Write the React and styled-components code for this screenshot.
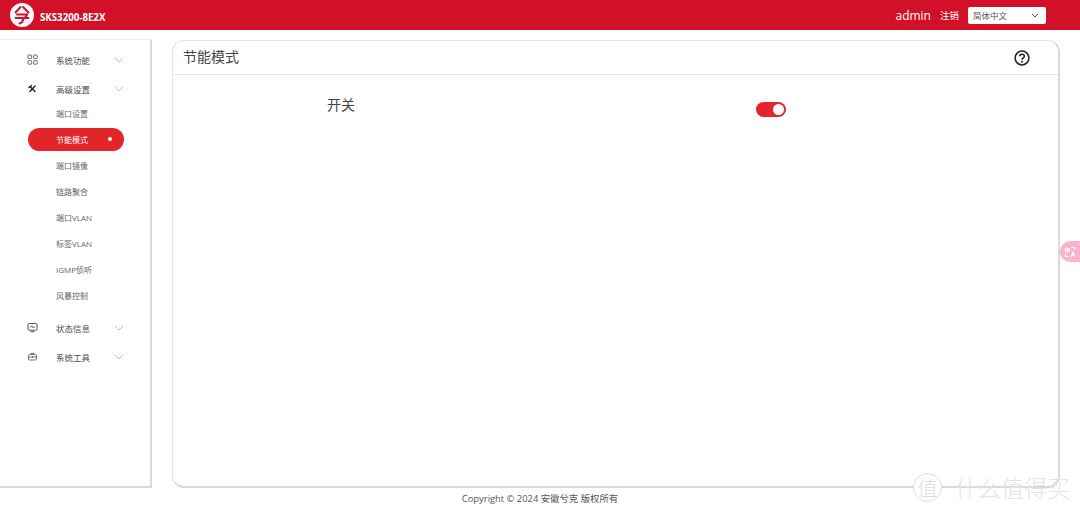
import React from "react";
import styled, { createGlobalStyle } from "styled-components";

const GlobalStyle = createGlobalStyle`
  html, body {
    margin: 0;
    padding: 0;
    background: #fff;
  }
  body {
    font-family: "Open Sans", "Noto Sans CJK SC", sans-serif;
    overflow: hidden;
  }
`;

const Page = styled.div`
  position: relative;
  width: 1080px;
  height: 512px;
  overflow: hidden;
  background: #fff;
`;

const Header = styled.header`
  height: 30px;
  background: #d21027;
  color: #fff;
  display: flex;
  align-items: center;
  padding: 0 34px 0 10px;
`;

const Logo = styled.svg`
  width: 24px;
  height: 24px;
  margin-top: -1px;
`;

const Model = styled.span`
  margin: 5px 0 0 6px;
  font-size: 9.7px;
  font-weight: 700;
`;

const UserName = styled.span`
  margin-left: auto;
  font-size: 12px;
`;

const Logout = styled.span`
  margin-left: 9px;
  font-size: 9.5px;
`;

const LangSelect = styled.div`
  margin-left: 9px;
  width: 78px;
  height: 17px;
  box-sizing: border-box;
  background: #fff;
  border-radius: 2px;
  color: #555;
  font-size: 8.5px;
  display: flex;
  align-items: center;
  justify-content: space-between;
  padding: 0 7px 0 5px;
`;

const Main = styled.div`
  display: flex;
  gap: 20px;
  height: 448px;
  margin-top: 10px;
`;

const Sidebar = styled.nav`
  width: 152px;
  box-sizing: border-box;
  background: #fff;
  border-right: 2px solid #d9d9d9;
  border-bottom: 2px solid #d9d9d9;
  box-shadow: 0 -1px 0 #eee;
  padding-top: 5px;
`;

const GroupRow = styled.div`
  height: 29px;
  display: flex;
  align-items: center;
  padding-left: 27px;
  color: #4a4a4a;
  font-size: 8.5px;
  margin-top: ${(p) => p.$gap || 0}px;
`;

const GroupIcon = styled.svg`
  width: 11px;
  height: 11px;
  margin-right: 18px;
`;

const Chevron = styled.svg`
  width: 10px;
  height: 6px;
  margin-left: auto;
  margin-right: 26px;
`;

const SubList = styled.div`
  display: flex;
  flex-direction: column;
  margin-top: -3px;
`;

const SubItem = styled.div`
  height: 23px;
  margin: 1.5px 0 1.5px 28px;
  width: 96px;
  box-sizing: border-box;
  display: flex;
  align-items: center;
  justify-content: space-between;
  padding: 0 12px 0 28px;
  border-radius: 12px;
  font-size: 8px;
  color: ${(p) => (p.$active ? "#fff" : "#666")};
  background: ${(p) => (p.$active ? "#e12528" : "transparent")};
`;

const ActiveDot = styled.i`
  width: 4px;
  height: 4px;
  border-radius: 50%;
  background: #fff;
`;

const Card = styled.section`
  width: 888px;
  box-sizing: border-box;
  border: 1px solid #e3e3e3;
  border-right: 2px solid #d9d9d9;
  border-bottom: 2px solid #d9d9d9;
  border-radius: 12px;
  background: #fff;
`;

const CardHead = styled.div`
  height: 34px;
  box-sizing: border-box;
  border-bottom: 1px solid #e3e3e3;
  display: flex;
  align-items: center;
  justify-content: space-between;
  padding: 0 28px 4px 10px;
`;

const CardTitle = styled.h2`
  margin: 0;
  font-size: 14px;
  font-weight: 400;
  color: #444;
`;

const HelpIcon = styled.svg`
  width: 16px;
  height: 16px;
  margin-top: 4px;
`;

const SwitchRow = styled.div`
  display: flex;
  align-items: flex-start;
  padding: 21px 0 0 154px;
`;

const SwitchLabel = styled.span`
  font-size: 14px;
  line-height: 18px;
  color: #444;
`;

const Toggle = styled.div`
  margin: 6px 0 0 401px;
  width: 30px;
  height: 15px;
  border-radius: 8px;
  background: #e12528;
  display: flex;
  align-items: center;
  justify-content: flex-end;
  padding-right: 2px;
  box-sizing: border-box;
`;

const ToggleKnob = styled.i`
  width: 11px;
  height: 11px;
  border-radius: 50%;
  background: #fff;
`;

const Footer = styled.footer`
  margin-top: 3px;
  text-align: center;
  font-size: 9.4px;
  line-height: 16px;
  color: #555;
`;

const TranslateTab = styled.div`
  position: absolute;
  right: 0;
  top: 241px;
  width: 20px;
  height: 21px;
  border-radius: 10px 0 0 10px;
  background: #fbb3cf;
  display: flex;
  align-items: center;
  justify-content: center;
`;

const TranslateIcon = styled.svg`
  width: 12px;
  height: 12px;
`;

const Watermark = styled.div`
  position: absolute;
  left: 913px;
  top: 473px;
  display: flex;
  align-items: center;
  pointer-events: none;
  font-family: "Noto Sans CJK SC", sans-serif;
  font-weight: 300;
`;

const WatermarkBadge = styled.span`
  width: 29px;
  height: 29px;
  box-sizing: border-box;
  border: 1px solid #ddd;
  border-radius: 50%;
  display: flex;
  align-items: center;
  justify-content: center;
  font-size: 20px;
  color: #ddd;
  background: #fff;
`;

const WatermarkText = styled.span`
  margin-left: 13px;
  font-size: 23px;
  line-height: 29px;
  color: #e4e4e4;
`;

const icons = {
  grid: (
    <g fill="none" stroke="#666" strokeWidth="1">
      <rect x="1" y="1" width="3.6" height="3.6" rx="0.8" />
      <rect x="6.6" y="1" width="3.6" height="3.6" rx="0.8" />
      <rect x="1" y="6.6" width="3.6" height="3.6" rx="0.8" />
      <rect x="6.6" y="6.6" width="3.6" height="3.6" rx="0.8" />
    </g>
  ),
  tools: (
    <g fill="none" stroke="#222" strokeWidth="1.4" strokeLinecap="round">
      <path d="M3 3.5 L8 8.5" />
      <path d="M8 3 L3 8.5" />
      <path d="M2 4.5 L4.5 2.5" />
    </g>
  ),
  monitor: (
    <g fill="none" stroke="#555" strokeWidth="1">
      <rect x="1" y="1.5" width="9" height="6.8" rx="1.2" />
      <path d="M2.5 5 L4.2 5 L5 3.5 L6 6 L6.8 5 L8.5 5" strokeWidth="0.7" />
      <path d="M3.5 9.8 L7.5 9.8" />
    </g>
  ),
  toolbox: (
    <g fill="none" stroke="#666" strokeWidth="0.9">
      <rect x="1.5" y="3.5" width="8" height="5.5" rx="1" />
      <path d="M4 3.5 L4 2.3 L7 2.3 L7 3.5" />
      <path d="M1.5 6 L9.5 6 M5.5 5 L5.5 7" />
    </g>
  ),
};

const NavGroup = ({ icon, label, gap }) => (
  <GroupRow $gap={gap}>
    <GroupIcon viewBox="0 0 11 11">{icons[icon]}</GroupIcon>
    {label}
    <Chevron viewBox="0 0 10 6">
      <path d="M1 1 L5 5 L9 1" fill="none" stroke="#f3a9a9" strokeWidth="1" />
    </Chevron>
  </GroupRow>
);

const subItems = [
  "端口设置",
  "节能模式",
  "端口镜像",
  "链路聚合",
  "端口VLAN",
  "标签VLAN",
  "IGMP侦听",
  "风暴控制",
];

const App = () => (
  <Page>
    <GlobalStyle />
    <Header>
      <Logo viewBox="0 0 24 24">
        <circle cx="12" cy="12" r="12" fill="#fff" />
        <g fill="none" stroke="#d21027" strokeWidth="2" strokeLinecap="round">
          <path d="M10.5 4 L5.5 9.5" />
          <path d="M13 4 L18.5 9.5" />
          <path d="M7 11.5 L17 11.5 C16.5 14 15 15 13 16" />
          <path d="M5.5 15 L18.5 15" />
          <path d="M13 15.5 C13 18 12.5 20 9.5 20.5" />
        </g>
      </Logo>
      <Model>SKS3200-8E2X</Model>
      <UserName>admin</UserName>
      <Logout>注销</Logout>
      <LangSelect>
        简体中文
        <svg width="8" height="5" viewBox="0 0 8 5">
          <path d="M1 1 L4 4 L7 1" fill="none" stroke="#555" strokeWidth="1" />
        </svg>
      </LangSelect>
    </Header>
    <Main>
      <Sidebar>
        <NavGroup icon="grid" label="系统功能" />
        <NavGroup icon="tools" label="高级设置" />
        <SubList>
          {subItems.map((item) => (
            <SubItem key={item} $active={item === "节能模式"}>
              {item}
              {item === "节能模式" && <ActiveDot />}
            </SubItem>
          ))}
        </SubList>
        <NavGroup icon="monitor" label="状态信息" gap={5} />
        <NavGroup icon="toolbox" label="系统工具" />
      </Sidebar>
      <Card>
        <CardHead>
          <CardTitle>节能模式</CardTitle>
          <HelpIcon viewBox="0 0 16 16">
            <circle cx="8" cy="8" r="6.9" fill="none" stroke="#222" strokeWidth="1.5" />
            <path
              d="M5.7 6.3 C5.7 3.5 10.3 3.5 10.3 6.2 C10.3 7.9 8 7.8 8 9.7"
              fill="none"
              stroke="#222"
              strokeWidth="1.6"
            />
            <circle cx="8" cy="11.7" r="1" fill="#222" />
          </HelpIcon>
        </CardHead>
        <SwitchRow>
          <SwitchLabel>开关</SwitchLabel>
          <Toggle>
            <ToggleKnob />
          </Toggle>
        </SwitchRow>
      </Card>
    </Main>
    <Footer>Copyright © 2024 安徽兮克 版权所有</Footer>
    <TranslateTab>
      <TranslateIcon viewBox="0 0 13 13">
        <g fill="none" stroke="#fff" strokeWidth="1.1">
          <path d="M1.5 3 L6 3 L6 5.5 L1.5 5.5 Z M3.7 1 L3.7 7.5" />
          <path d="M7.5 12 L9.7 6.5 L12 12 M8.3 10.2 L11.2 10.2" />
          <path d="M1.5 9 L1.5 11.5 L5 11.5" />
          <path d="M8 1.5 L11.5 1.5 L11.5 4" />
        </g>
      </TranslateIcon>
    </TranslateTab>
    <Watermark>
      <WatermarkBadge>值</WatermarkBadge>
      <WatermarkText>什么值得买</WatermarkText>
    </Watermark>
  </Page>
);

export default App;
